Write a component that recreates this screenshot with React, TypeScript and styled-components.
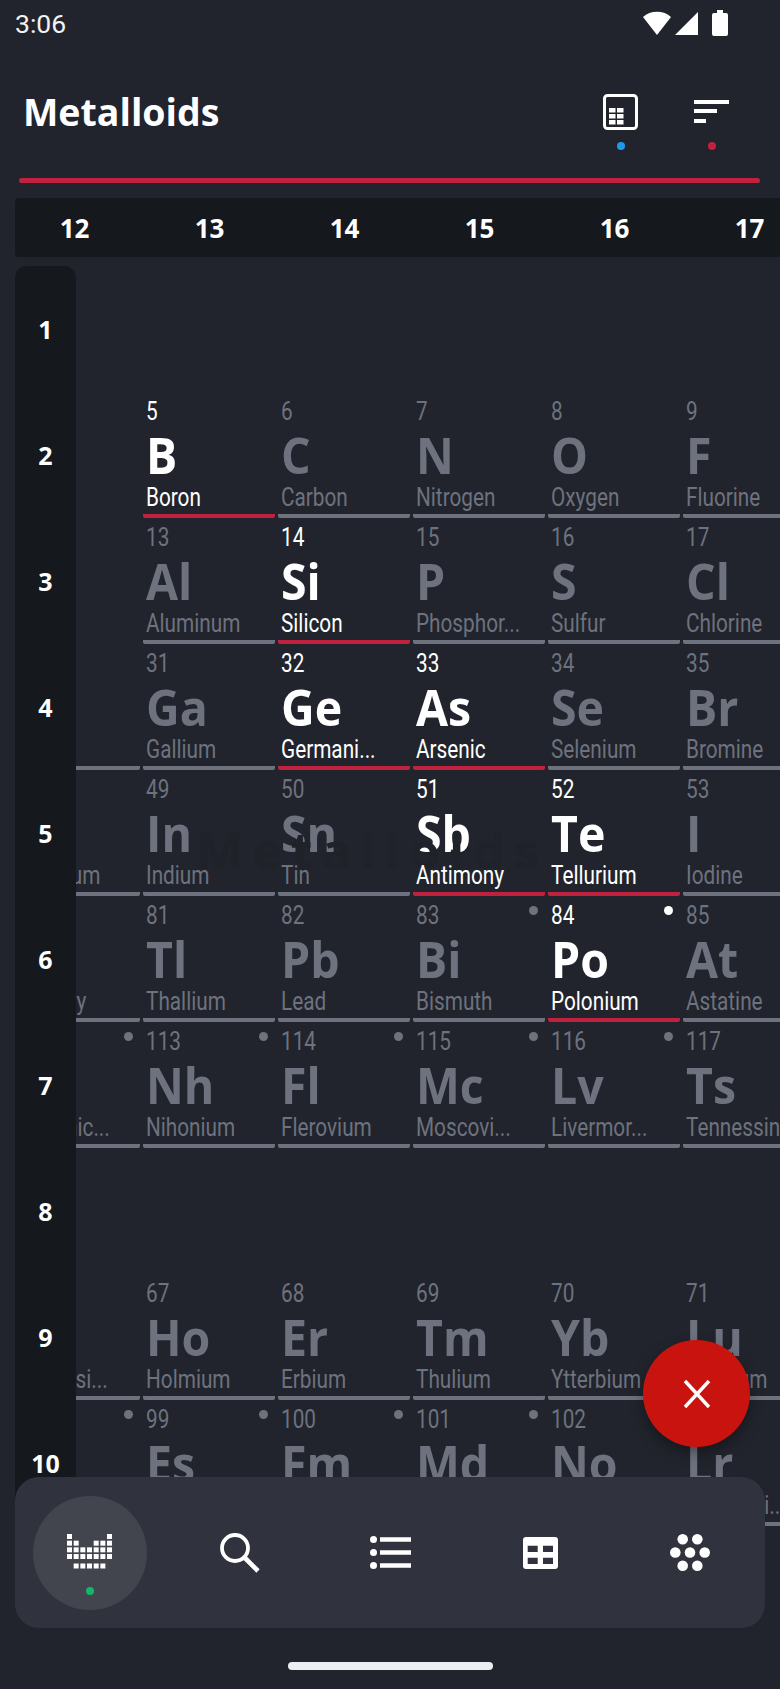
import React from "react";
import styled, { createGlobalStyle } from "styled-components";

const GlobalStyle = createGlobalStyle`
  html, body { margin: 0; padding: 0; background: #21242c; }
  body { font-family: "Roboto", sans-serif; color: #fff; }
`;

const Screen = styled.div`
  position: relative;
  width: 780px;
  height: 1689px;
  overflow: hidden;
  background: #21242c;
`;

const StatusBar = styled.div`
  height: 46px;
  padding: 0 52px 0 15px;
  display: flex;
  align-items: center;
  justify-content: space-between;
  font-size: 26.5px;
  color: #f2f2f2;
`;

const StatusIcons = styled.div`
  display: flex;
  align-items: center;
  gap: 2px;
`;

const BatteryIcon = styled.svg`
  margin-left: 11px;
`;

const TitleBar = styled.div`
  height: 132px;
  padding: 0 50px 0 23px;
  display: flex;
  align-items: center;
  justify-content: space-between;
`;

const Title = styled.h1`
  margin: 0;
  font-family: "Open Sans", sans-serif;
  font-weight: 700;
  font-size: 37.5px;
  line-height: 50px;
`;

const ToolIcons = styled.div`
  display: flex;
  gap: 55px;
  margin-top: 19px;
`;

const ToolIcon = styled.div`
  width: 36px;
  display: flex;
  flex-direction: column;
  align-items: center;
  gap: 12px;
`;

const Dot = styled.span<{ $color: string }>`
  width: 8px;
  height: 8px;
  border-radius: 50%;
  background: ${(p) => p.$color};
`;

const Rule = styled.div`
  height: 5px;
  margin: 0 20px 0 19px;
  border-radius: 3px;
  background: #c0213f;
`;

const GroupBar = styled.div`
  margin: 15px 0 9px 15px;
  height: 59px;
  border-radius: 4px 0 0 4px;
  background: #15181d;
  overflow: hidden;
  display: flex;
`;

const GroupCell = styled.div`
  flex: 0 0 135px;
  text-align: center;
  font-family: "Open Sans", sans-serif;
  font-weight: 700;
  font-size: 26px;
  line-height: 60px;

  &:first-child {
    margin-left: -8px;
  }
`;

const Body = styled.div`
  display: flex;
  padding-left: 15px;
`;

const Rail = styled.div`
  flex: 0 0 61px;
  height: 1300px;
  border-radius: 12px 12px 0 0;
  background: #15181d;
`;

const RailCell = styled.div`
  height: 126px;
  display: flex;
  align-items: center;
  justify-content: center;
  font-family: "Open Sans", sans-serif;
  font-weight: 700;
  font-size: 25px;
`;

const TableView = styled.div`
  flex: 1;
  overflow: hidden;
`;

const Table = styled.div`
  margin-left: -68px;
  width: 830px;
  display: grid;
  grid-template-columns: repeat(6, 132px);
  grid-auto-rows: 121px;
  gap: 5px 3px;
  padding-top: 5px;
`;

const Cell = styled.div<{ $active: boolean }>`
  position: relative;
  box-sizing: border-box;
  min-width: 0;
  padding: 0 0 0 3px;
  border-bottom: 4px solid ${(p) => (p.$active ? "#c0213f" : "#6d727e")};
  border-radius: 0 0 2px 2px;
  color: ${(p) => (p.$active ? "#ffffff" : "#6d727e")};
`;

const Empty = styled.div``;

const AtomicNumber = styled.div`
  font-size: 25px;
  line-height: 30px;
  transform: scaleX(0.83);
  transform-origin: left;
`;

const Symbol = styled.div`
  font-family: "Open Sans", sans-serif;
  font-weight: 700;
  font-size: 50px;
  line-height: 56px;
  transform: scaleX(0.93);
  transform-origin: left;
`;

const Name = styled.div`
  position: relative;
  z-index: 2;
  font-size: 25px;
  line-height: 30px;
  white-space: nowrap;
  transform: scaleX(0.83);
  transform-origin: left;
`;

const Radioactive = styled.span`
  position: absolute;
  top: 5px;
  right: 7px;
  width: 9px;
  height: 9px;
  border-radius: 50%;
  background: currentColor;
`;

const GhostLabel = styled.div`
  position: absolute;
  z-index: 1;
  left: 196px;
  top: 820px;
  font-family: "Open Sans", sans-serif;
  font-weight: 700;
  font-size: 50px;
  line-height: 60px;
  letter-spacing: 9px;
  color: #1f2229;
`;

const Fab = styled.button`
  position: absolute;
  z-index: 3;
  left: 643px;
  top: 1340px;
  width: 107px;
  height: 107px;
  padding: 0;
  border: 0;
  border-radius: 50%;
  background: #c9130f;
  box-shadow: 0 6px 14px rgba(0, 0, 0, 0.35);
  display: flex;
  align-items: center;
  justify-content: center;
`;

const NavBar = styled.nav`
  position: absolute;
  z-index: 3;
  left: 15px;
  top: 1477px;
  width: 750px;
  height: 151px;
  border-radius: 24px;
  background: #30333d;
  display: flex;
  align-items: center;
  gap: 36px;
  padding-left: 18px;
  box-sizing: border-box;
`;

const NavItem = styled.div<{ $active?: boolean }>`
  position: relative;
  flex: 0 0 114px;
  height: 114px;
  border-radius: 50%;
  background: ${(p) => (p.$active ? "#42454e" : "transparent")};
  display: flex;
  align-items: center;
  justify-content: center;
`;

const NavDot = styled(Dot)`
  position: absolute;
  left: 53px;
  bottom: 15px;
`;

const TableGlyph = styled.svg`
  margin-top: -2px;
`;

const HomeBar = styled.div`
  position: absolute;
  left: 288px;
  top: 1662px;
  width: 205px;
  height: 8px;
  border-radius: 4px;
  background: #eceef2;
`;

type El = { n: number; s: string; name: string; on?: boolean; dot?: boolean };

const rows: (El | null)[][] = [
  [null, null, null, null, null, null],
  [null, { n: 5, s: "B", name: "Boron", on: true }, { n: 6, s: "C", name: "Carbon" }, { n: 7, s: "N", name: "Nitrogen" }, { n: 8, s: "O", name: "Oxygen" }, { n: 9, s: "F", name: "Fluorine" }],
  [null, { n: 13, s: "Al", name: "Aluminum" }, { n: 14, s: "Si", name: "Silicon", on: true }, { n: 15, s: "P", name: "Phosphor..." }, { n: 16, s: "S", name: "Sulfur" }, { n: 17, s: "Cl", name: "Chlorine" }],
  [{ n: 30, s: "Zn", name: "Zinc" }, { n: 31, s: "Ga", name: "Gallium" }, { n: 32, s: "Ge", name: "Germani...", on: true }, { n: 33, s: "As", name: "Arsenic", on: true }, { n: 34, s: "Se", name: "Selenium" }, { n: 35, s: "Br", name: "Bromine" }],
  [{ n: 48, s: "Cd", name: "Cadmium" }, { n: 49, s: "In", name: "Indium" }, { n: 50, s: "Sn", name: "Tin" }, { n: 51, s: "Sb", name: "Antimony", on: true }, { n: 52, s: "Te", name: "Tellurium", on: true }, { n: 53, s: "I", name: "Iodine" }],
  [{ n: 80, s: "Hg", name: "Mercury" }, { n: 81, s: "Tl", name: "Thallium" }, { n: 82, s: "Pb", name: "Lead" }, { n: 83, s: "Bi", name: "Bismuth", dot: true }, { n: 84, s: "Po", name: "Polonium", on: true, dot: true }, { n: 85, s: "At", name: "Astatine" }],
  [{ n: 112, s: "Cn", name: "Copernic...", dot: true }, { n: 113, s: "Nh", name: "Nihonium", dot: true }, { n: 114, s: "Fl", name: "Flerovium", dot: true }, { n: 115, s: "Mc", name: "Moscovi...", dot: true }, { n: 116, s: "Lv", name: "Livermor...", dot: true }, { n: 117, s: "Ts", name: "Tennessine" }],
  [null, null, null, null, null, null],
  [{ n: 66, s: "Dy", name: "Dysprosi..." }, { n: 67, s: "Ho", name: "Holmium" }, { n: 68, s: "Er", name: "Erbium" }, { n: 69, s: "Tm", name: "Thulium" }, { n: 70, s: "Yb", name: "Ytterbium" }, { n: 71, s: "Lu", name: "Lutetium" }],
  [{ n: 98, s: "Cf", name: "Californi...", dot: true }, { n: 99, s: "Es", name: "Einsteini...", dot: true }, { n: 100, s: "Fm", name: "Fermium", dot: true }, { n: 101, s: "Md", name: "Mendele...", dot: true }, { n: 102, s: "No", name: "Nobelium", dot: true }, { n: 103, s: "Lr", name: "Lawrenci..." }],
];

const groups = [12, 13, 14, 15, 16, 17];

// mini periodic table of the nav bar: which rows each column fills
const miniColumns = [
  [0, 1, 2, 3],
  [1, 2, 3],
  [2, 3],
  [2, 3],
  [1, 2, 3],
  [1, 2, 3],
  [0, 1, 2, 3],
];

const PeriodicIcon = () => (
  <TableGlyph width="46" height="35" viewBox="0 0 46 35" fill="#fff">
    {miniColumns.map((col, x) =>
      col.map((y) => <rect key={`${x}-${y}`} x={x * 6.67} y={y * 6.67} width="5" height="5" />)
    )}
    {[1, 2, 3, 4, 5].map((x) => (
      <rect key={x} x={x * 6.67} y="29.5" width="5" height="5" />
    ))}
  </TableGlyph>
);

export default function App() {
  return (
    <Screen>
      <GlobalStyle />
      <StatusBar>
        <span>3:06</span>
        <StatusIcons>
          <svg width="30" height="25" viewBox="0 0 30 25" fill="#fff">
            <path d="M1 6 C8 -1 22 -1 29 6 L15 24 Z" />
          </svg>
          <svg width="25" height="25" viewBox="0 0 25 25" fill="#fff">
            <path d="M24 1 V24 H1 Z" />
          </svg>
          <BatteryIcon width="16" height="26" viewBox="0 0 16 26" fill="#fff">
            <path d="M5 0 H11 V3 H14 Q16 3 16 5 V24 Q16 26 14 26 H2 Q0 26 0 24 V5 Q0 3 2 3 H5 Z" />
          </BatteryIcon>
        </StatusIcons>
      </StatusBar>
      <TitleBar>
        <Title>Metalloids</Title>
        <ToolIcons>
          <ToolIcon>
            <svg width="36" height="36" viewBox="0 0 36 36" fill="none">
              <rect x="1.5" y="1.5" width="32" height="33" rx="3" stroke="#fff" strokeWidth="3" />
              <path fill="#fff" d="M6 14h6.500v4.500H6zM14 14h6.500v4.500H14zM6 20h6.500v4.500H6zM14 20h6.500v4.500H14zM6 26h6.500v4.500H6zM14 26h6.500v4.500H14z" />
            </svg>
            <Dot $color="#1e9be8" />
          </ToolIcon>
          <ToolIcon>
            <svg width="36" height="36" viewBox="0 0 36 36" fill="#fff">
              <path d="M0 6h35v4H0zM0 15h23v4H0zM0 25h12v4H0z" />
            </svg>
            <Dot $color="#c0213f" />
          </ToolIcon>
        </ToolIcons>
      </TitleBar>
      <Rule />
      <GroupBar>
        {groups.map((g) => (
          <GroupCell key={g}>{g}</GroupCell>
        ))}
      </GroupBar>
      <Body>
        <Rail>
          {rows.map((_, i) => (
            <RailCell key={i}>{i + 1}</RailCell>
          ))}
        </Rail>
        <TableView>
          <Table>
            {rows.flat().map((el, i) =>
              el ? (
                <Cell key={i} $active={!!el.on}>
                  {el.dot && <Radioactive />}
                  <AtomicNumber>{el.n}</AtomicNumber>
                  <Symbol>{el.s}</Symbol>
                  <Name>{el.name}</Name>
                </Cell>
              ) : (
                <Empty key={i} />
              )
            )}
          </Table>
        </TableView>
      </Body>
      <GhostLabel>Metalloids</GhostLabel>
      <Fab aria-label="close">
        <svg width="30" height="30" viewBox="0 0 30 30" stroke="#fff" strokeWidth="3.4" fill="none">
          <path d="M3 2 L27 28 M27 2 L3 28" />
        </svg>
      </Fab>
      <NavBar>
        <NavItem $active>
          <PeriodicIcon />
          <NavDot $color="#10b868" />
        </NavItem>
        <NavItem>
          <svg width="40" height="40" viewBox="0 0 40 40" fill="none" stroke="#fff" strokeWidth="3.8">
            <circle cx="15" cy="15" r="13" />
            <path d="M24.500 24.500 L38 38" strokeWidth="4.600" />
          </svg>
        </NavItem>
        <NavItem>
          <svg width="41" height="33" viewBox="0 0 41 33" fill="#fff">
            <circle cx="3.500" cy="3.500" r="3.500" />
            <circle cx="3.500" cy="16.500" r="3.500" />
            <circle cx="3.500" cy="29.500" r="3.500" />
            <path d="M10 1.200h31v4.600H10zM10 14.200h31v4.600H10zM10 27.200h31v4.600H10z" />
          </svg>
        </NavItem>
        <NavItem>
          <svg width="35" height="32" viewBox="0 0 35 32">
            <rect width="35" height="32" rx="3" fill="#fff" />
            <path fill="#30333d" d="M4.700 8.700h10v6.300h-10zM20 8.700h10v6.300H20zM4.700 20.700h10v6.300h-10zM20 20.700h10v6.300H20z" />
          </svg>
        </NavItem>
        <NavItem>
          <svg width="40" height="37" viewBox="0 0 40 37" fill="#fff">
            <circle cx="12.700" cy="5.300" r="5.300" />
            <circle cx="27.300" cy="5.300" r="5.300" />
            <circle cx="5.300" cy="18.500" r="5.300" />
            <circle cx="20" cy="18.500" r="5.300" />
            <circle cx="34.700" cy="18.500" r="5.300" />
            <circle cx="12.700" cy="31.700" r="5.300" />
            <circle cx="27.300" cy="31.700" r="5.300" />
          </svg>
        </NavItem>
      </NavBar>
      <HomeBar />
    </Screen>
  );
}
